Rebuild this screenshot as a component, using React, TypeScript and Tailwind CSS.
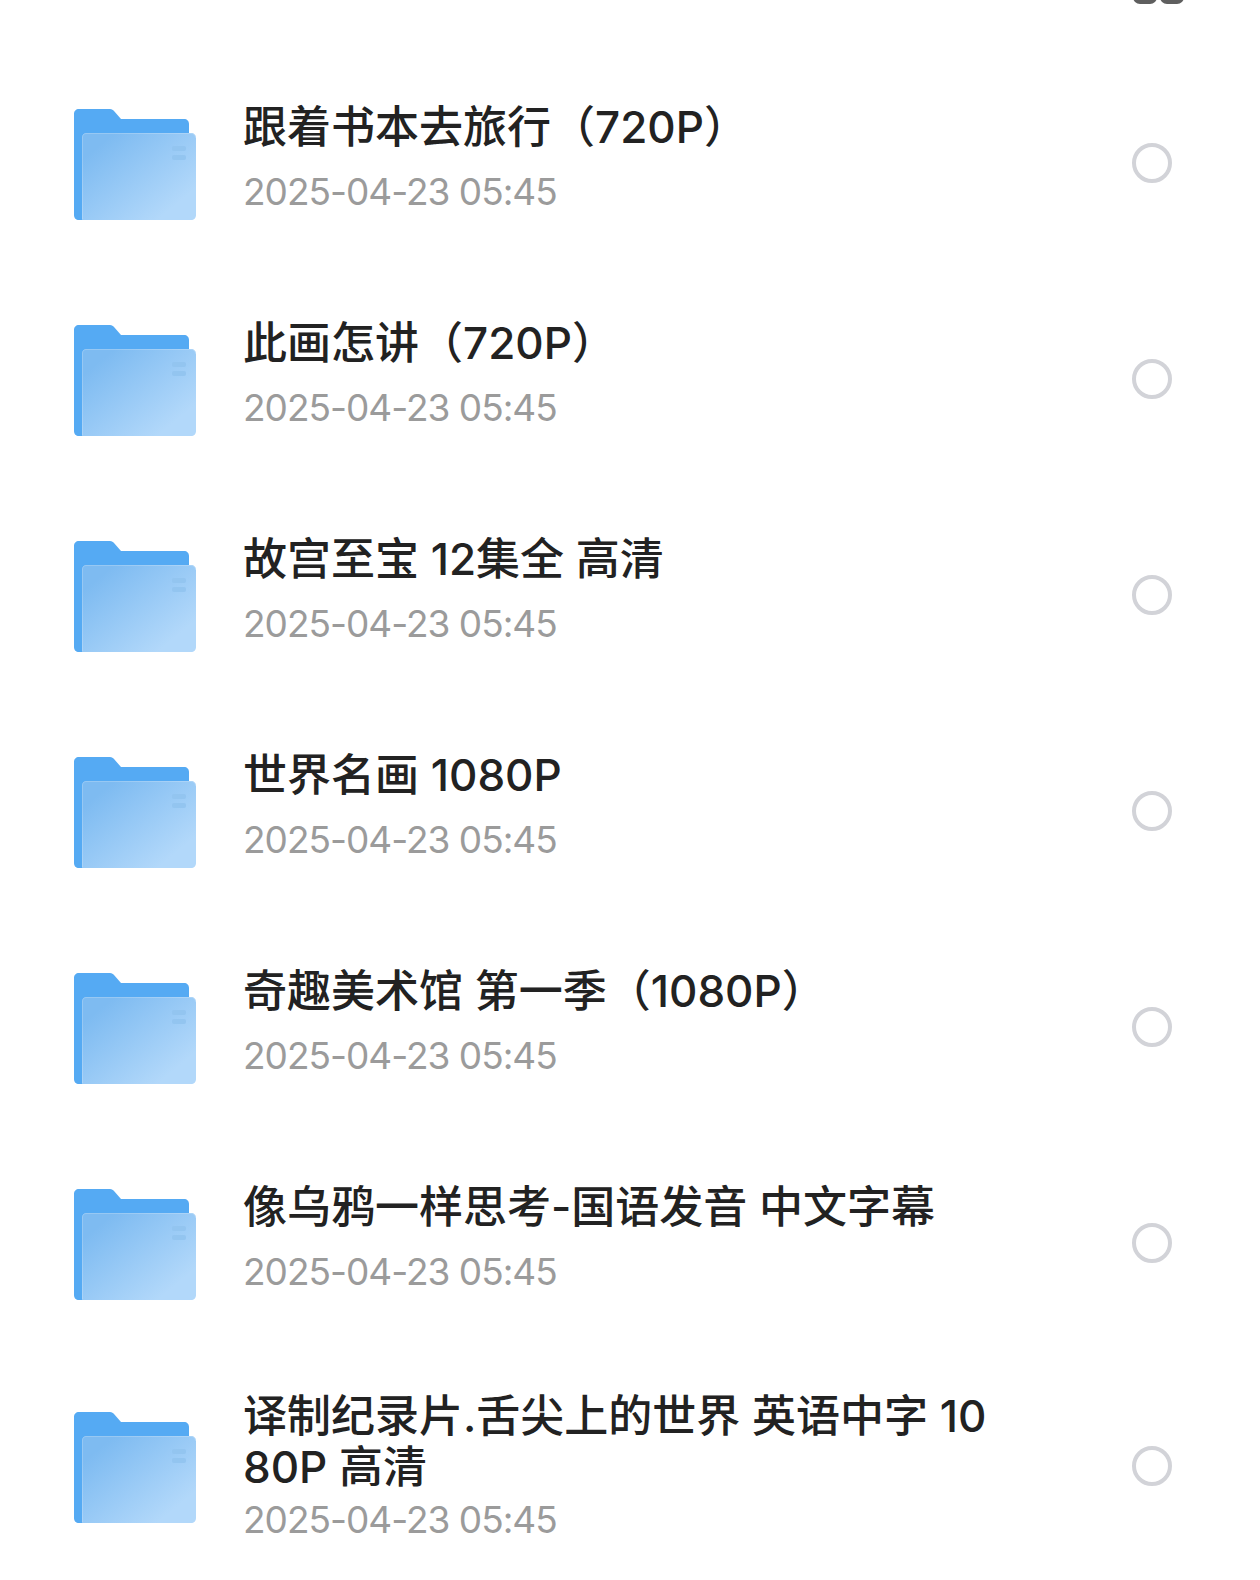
import { useId } from "react";

const files = [
  "跟着书本去旅行（720P）",
  "此画怎讲（720P）",
  "故宫至宝 12集全 高清",
  "世界名画 1080P",
  "奇趣美术馆 第一季（1080P）",
  "像乌鸦一样思考-国语发音 中文字幕",
  "译制纪录片.舌尖上的世界 英语中字 1080P 高清",
];

const FolderIcon = () => {
  const id = useId();
  return (
    <svg width="122" height="111" viewBox="0 0 122 111" className="shrink-0 mt-[3px]">
      <defs>
        <linearGradient id={id} x1="0.1" y1="0.2" x2="0.8" y2="0.85">
          <stop offset="0" stopColor="#7ebbf1" />
          <stop offset="1" stopColor="#b2d8fa" />
        </linearGradient>
      </defs>
      <path
        d="M5 0H36C38 0 39 1 40 2L47 10H110C113 10 115 12 115 15V24H20V111H5C2 111 0 109 0 106V5C0 2 2 0 5 0Z"
        fill="#55aaf3"
      />
      <path
        d="M12 24H117C120 24 122 26 122 29V106C122 109 120 111 117 111H8V28C8 26 10 24 12 24Z"
        fill={`url(#${id})`}
      />
      <path
        d="M12 24.5H117C120 24.5 121.5 26 121.5 29M8.5 110V28C8.5 26 10 24.5 12 24.5"
        fill="none"
        stroke="#ffffff"
        strokeOpacity="0.2"
      />
      <rect x="98" y="37" width="14" height="5" rx="2" fill="#93c5f0" />
      <rect x="98" y="46" width="14" height="5" rx="2" fill="#93c5f0" />
    </svg>
  );
};

const FileRow = ({ name, tall }: { name: string; tall?: boolean }) => (
  <div className={`flex items-center pl-[74px] pr-[88px] ${tall ? "h-[230px]" : "h-[216px]"}`}>
    <FolderIcon />
    <div className={`ml-[47px] flex-1 min-w-0 ${tall ? "" : "pb-[10px]"}`}>
      <div className="text-[44px] leading-[51px] font-medium text-[#222222] max-w-[760px] break-all">{name}</div>
      <div
        className={`text-[37px] leading-[44px] tracking-[-1px] text-[#9b9b9b] ${tall ? "mt-[5px]" : "mt-[17px]"}`}
        style={{ fontFamily: "Inter, sans-serif" }}
      >
        2025-04-23 05:45
      </div>
    </div>
    <div className="w-10 h-10 rounded-full border-[4px] border-[#d2d3d8] shrink-0" />
  </div>
);

export default function App() {
  return (
    <div
      className="relative w-[1260px] h-[1580px] overflow-hidden bg-white"
      style={{ fontFamily: 'Inter, "Noto Sans CJK SC", sans-serif' }}
    >
      {/* cut off toolbar icons at the very top */}
      <div className="absolute top-[-20px] left-[1133px] flex gap-[3px]">
        <div className="w-[24px] h-[24px] rounded-[7px] bg-[#5f5f5f]" />
        <div className="w-[24px] h-[24px] rounded-[7px] bg-[#5f5f5f]" />
      </div>
      <div className="pt-[55px]">
        {files.map((name, i) => (
          <FileRow key={name} name={name} tall={i === files.length - 1} />
        ))}
      </div>
    </div>
  );
}
